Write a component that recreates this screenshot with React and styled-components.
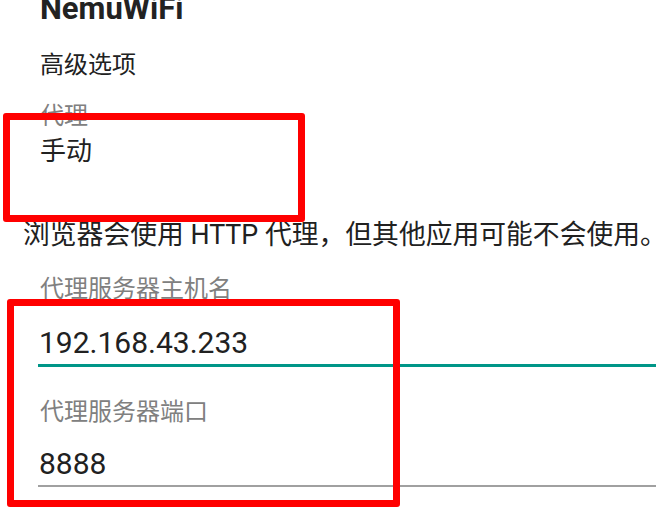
import React from 'react';
import styled, { createGlobalStyle } from 'styled-components';

const GlobalStyle = createGlobalStyle`
    html, body {
        margin: 0;
        padding: 0;
        background: #ffffff;
        overflow: hidden;
    }
    * {
        box-sizing: border-box;
    }
`;

const Page = styled.div`
    position: relative;
    width: 656px;
    height: 514px;
    overflow: hidden;
    background: #ffffff;
    font-family: "Noto Sans CJK SC", Roboto, sans-serif;
    color: #212121;
`;

const Title = styled.h1`
    margin: -7px 0 0 40px;
    font-family: Roboto, "Noto Sans CJK SC", sans-serif;
    font-size: 31px;
    line-height: 31px;
    font-weight: 700;
    color: #222222;
`;

const SectionHeader = styled.div`
    margin: 27px 0 0 40px;
    font-size: 24px;
    line-height: 24px;
`;

const PrefLabel = styled.div`
    margin: 27px 0 0 40px;
    font-size: 24px;
    line-height: 24px;
    color: #808080;
`;

const PrefValue = styled.div`
    margin: 10px 0 0 40px;
    font-size: 26px;
    line-height: 26px;
    color: #212121;
`;

const Summary = styled.p`
    margin: 60px 0 0 23px;
    font-family: Roboto, "Noto Sans CJK SC", sans-serif;
    font-size: 26.8px;
    line-height: 26px;
    white-space: nowrap;
    color: #212121;
`;

const Field = styled.div`
    margin: ${({ $gap }) => $gap}px 0 0 38px;
    display: flex;
    flex-direction: column;
`;

const FieldLabel = styled.label`
    padding-left: 2px;
    font-size: 24px;
    line-height: 24px;
    color: #808080;
`;

const FieldInput = styled.input`
    width: 100%;
    height: ${({ $top, $focused }) => $top + 30 + 7 + ($focused ? 3 : 2)}px;
    padding: ${({ $top }) => $top}px 0 7px 1px;
    border: none;
    border-bottom: ${({ $focused }) => ($focused ? '3px solid #009688' : '2px solid #a0a0a0')};
    outline: none;
    background: transparent;
    font-family: Roboto, sans-serif;
    font-size: 30px;
    line-height: 30px;
    color: #212121;
`;

const Annotation = styled.div`
    position: absolute;
    left: ${({ $x }) => $x}px;
    top: ${({ $y }) => $y}px;
    width: ${({ $w }) => $w}px;
    height: ${({ $h }) => $h}px;
    border: 7px solid #ff0000;
    border-radius: 3px;
    pointer-events: none;
`;

export default function App() {
    return (
        <>
            <GlobalStyle />
            <Page>
                <Title>NemuWiFi</Title>
                <SectionHeader>高级选项</SectionHeader>
                <PrefLabel>代理</PrefLabel>
                <PrefValue>手动</PrefValue>
                <Summary>浏览器会使用 HTTP 代理，但其他应用可能不会使用。</Summary>

                <Field $gap={27}>
                    <FieldLabel>代理服务器主机名</FieldLabel>
                    <FieldInput readOnly value="192.168.43.233" $focused $top={28} />
                </Field>

                <Field $gap={31}>
                    <FieldLabel>代理服务器端口</FieldLabel>
                    <FieldInput readOnly value="8888" $top={26} />
                </Field>

                <Annotation $x={3} $y={113} $w={302} $h={109} />
                <Annotation $x={7} $y={299} $w={393} $h={208} />
            </Page>
        </>
    );
}
